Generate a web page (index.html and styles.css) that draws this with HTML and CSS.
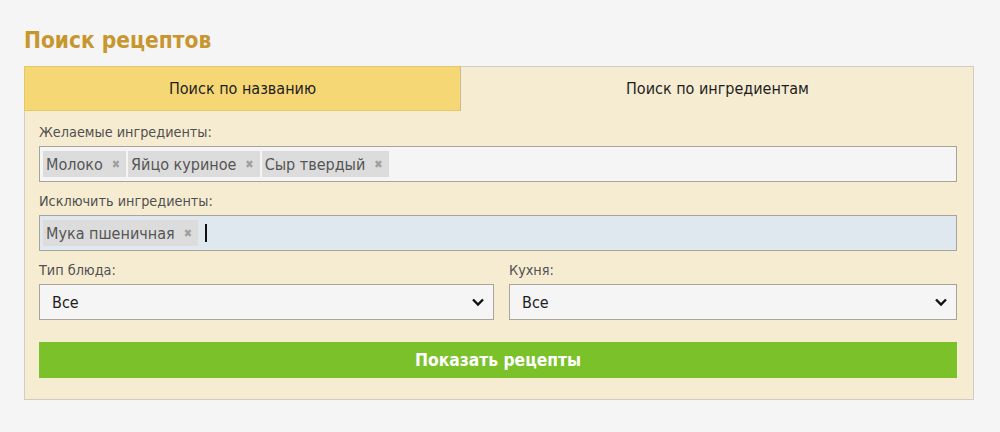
FILE: index.html
```html
<!DOCTYPE html>
<html lang="ru">
<head>
<meta charset="utf-8">
<title>Поиск рецептов</title>
<link rel="stylesheet" href="styles.css">
</head>
<body>
<div class="page">
  <h1 class="title">Поиск рецептов</h1>
  <div class="panel">
    <div class="tabs">
      <div class="tab tab-active">Поиск по названию</div>
      <div class="tab">Поиск по ингредиентам</div>
    </div>
    <div class="form">
      <div class="label">Желаемые ингредиенты:</div>
      <div class="tagbox">
        <span class="tag">Молоко<span class="tag-x">✖</span></span>
        <span class="tag">Яйцо куриное<span class="tag-x">✖</span></span>
        <span class="tag">Сыр твердый<span class="tag-x">✖</span></span>
      </div>
      <div class="label">Исключить ингредиенты:</div>
      <div class="tagbox tagbox-focus">
        <span class="tag">Мука пшеничная<span class="tag-x">✖</span></span>
        <span class="caret"></span>
      </div>
      <div class="row">
        <div class="col">
          <div class="label">Тип блюда:</div>
          <div class="select">
            <span>Все</span>
            <svg class="chev" width="14" height="10" viewBox="0 0 14 10"><path d="M2 2.5 L7 7.5 L12 2.5" fill="none" stroke="#111" stroke-width="2.4"/></svg>
          </div>
        </div>
        <div class="col">
          <div class="label">Кухня:</div>
          <div class="select">
            <span>Все</span>
            <svg class="chev" width="14" height="10" viewBox="0 0 14 10"><path d="M2 2.5 L7 7.5 L12 2.5" fill="none" stroke="#111" stroke-width="2.4"/></svg>
          </div>
        </div>
      </div>
      <button class="submit">Показать рецепты</button>
    </div>
  </div>
</div>
</body>
</html>
```
FILE: styles.css
```css
* { box-sizing: border-box; }
html, body { margin: 0; padding: 0; }
body {
  background: #f5f5f5;
  font-family: "DejaVu Sans Condensed", "DejaVu Sans", sans-serif;
  color: #222;
}
.page { padding: 26px 0 0 24px; width: 974px; }
.title {
  margin: 0 0 12px 0;
  font-size: 22.5px;
  line-height: 28px;
  font-weight: bold;
  color: #c8962e;
}
.panel {
  width: 950px;
  height: 334px;
  background: #f6ecd2;
  border: 1px solid #d2cdc2;
}
.tabs { display: flex; height: 45px; margin: -1px 0 0 -1px; }
.tab {
  flex: 0 0 513px;
  display: flex;
  align-items: center;
  justify-content: center;
  font-size: 16px;
  color: #1e1e1e;
}
.tab-active {
  flex: 0 0 437px;
  background: #f5d776;
  border: 1px solid #e6c965;
  border-right: 1px solid #c9bb96;
}
.form { padding: 11px 16px 0 14px; }
.label {
  font-size: 14.3px;
  line-height: 20px;
  color: #505050;
  margin-bottom: 4px;
}
.tagbox {
  height: 36px;
  background: #f5f5f5;
  border: 1px solid #a9a49a;
  display: flex;
  align-items: center;
  gap: 2px;
  padding: 0 3px;
  margin-bottom: 9px;
}
.tagbox-focus { background: #dee8ee; }
.tag {
  height: 26px;
  display: inline-flex;
  align-items: center;
  background: #dcdcdc;
  color: #555;
  font-size: 16px;
  padding: 0 6px 0 3px;
}
.tag-x { color: #a0a0a0; font-size: 11px; margin-left: 9px; }
.caret { width: 2px; height: 18px; background: #111; margin-left: 5px; }
.row { display: flex; gap: 15px; }
.col { flex: 1 1 0; }
.col:first-child { flex: 0 0 455px; }
.select {
  height: 36px;
  background: #f5f5f5;
  border: 1px solid #a9a49a;
  display: flex;
  align-items: center;
  justify-content: space-between;
  padding: 0 8px 0 12px;
  font-size: 16px;
  color: #1e1e1e;
}
.chev { display: block; }
.submit {
  display: block;
  width: 918px;
  height: 36px;
  margin-top: 22px;
  border: 0;
  background: #7bc12a;
  color: #fff;
  font-family: inherit;
  font-size: 17.3px;
  font-weight: bold;
}
```
